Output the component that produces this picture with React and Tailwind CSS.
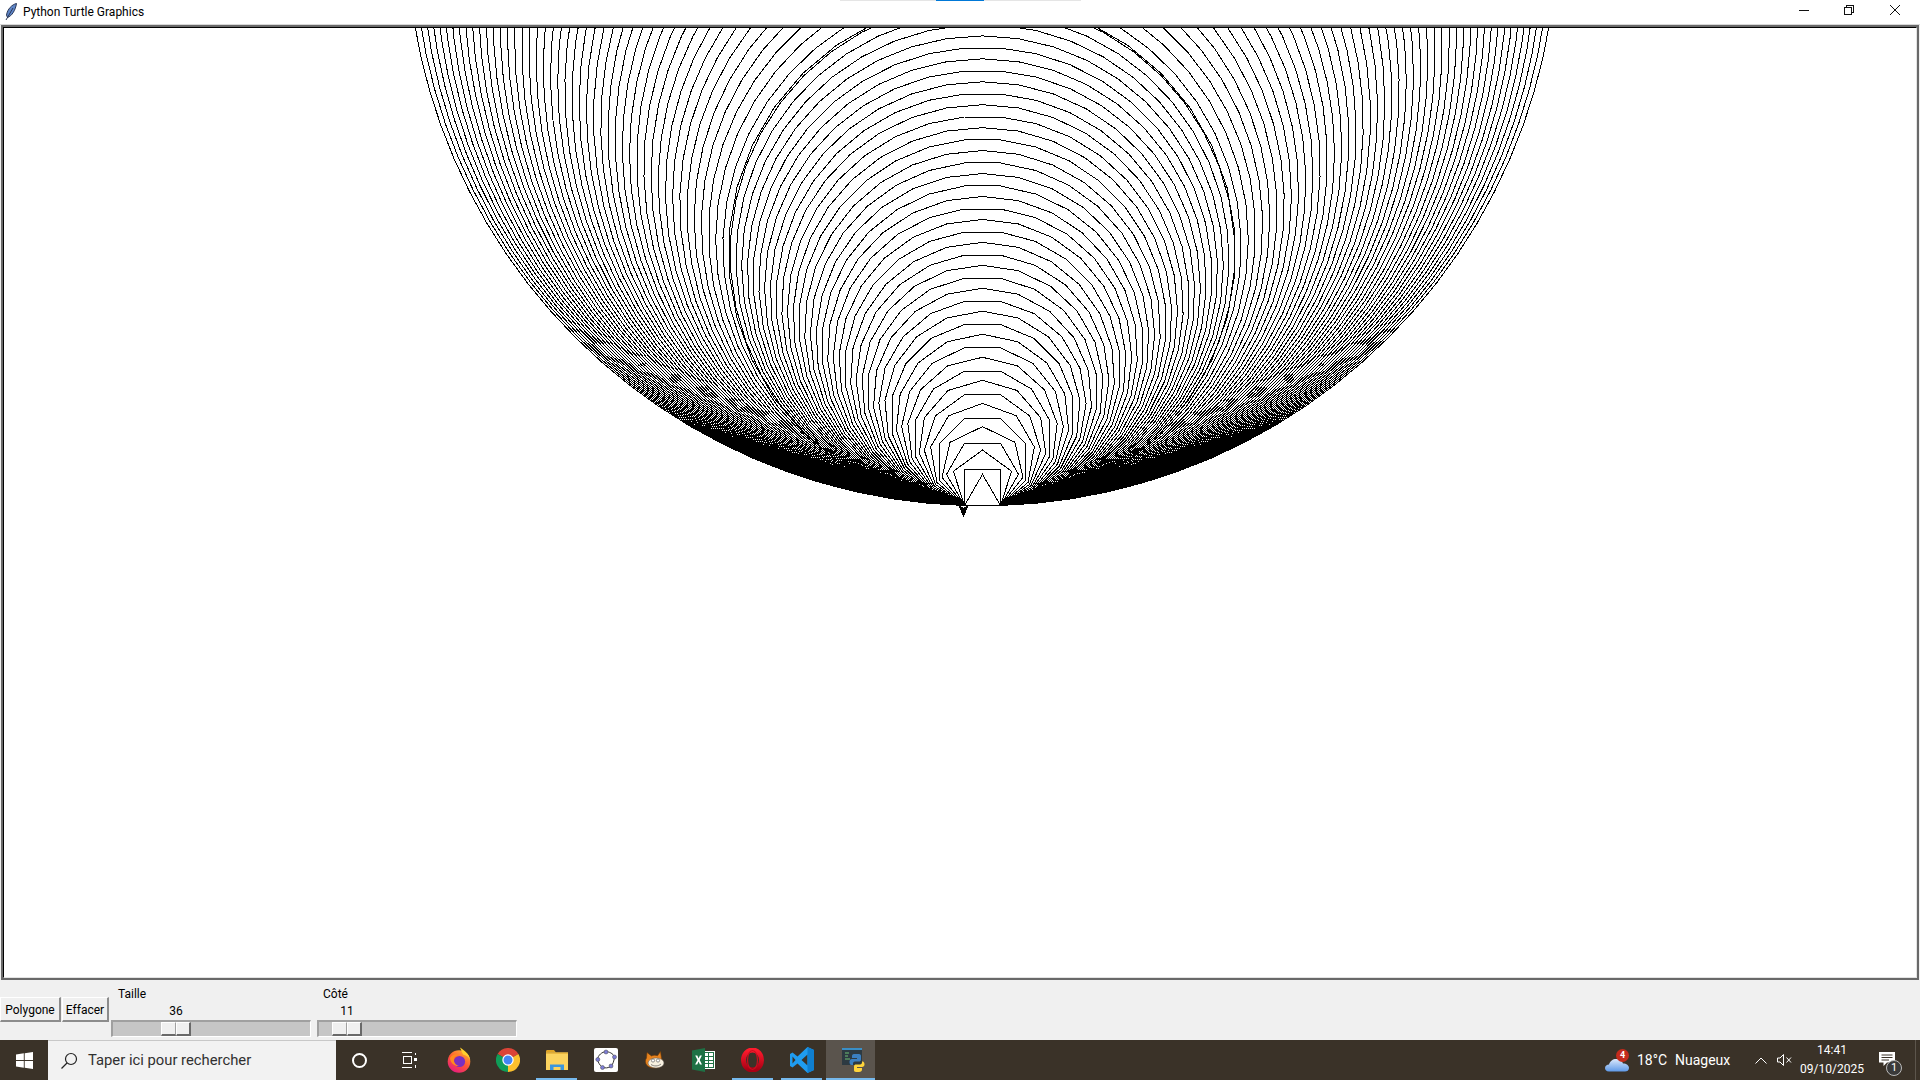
// Python Turtle Graphics window on a Windows 10 desktop

function polygonPath(sides, length, startX, startY) {
  let x = startX;
  let y = startY;
  let d = `M${x + 0.5} ${y + 0.5}`;
  for (let i = 0; i < sides; i++) {
    const angle = (i * 2 * Math.PI) / sides;
    x += length * Math.cos(angle);
    y -= length * Math.sin(angle);
    d += `L${(x + 0.5).toFixed(2)} ${(y + 0.5).toFixed(2)}`;
  }
  return d;
}

function ringPath(radius, sides) {
  const side = 2 * radius * Math.sin(Math.PI / sides);
  return polygonPath(sides, side, 981.5 - side / 2, 505);
}

function TurtleCanvas() {
  const polygons = [];
  for (let n = 3; n <= 44; n++) polygons.push(polygonPath(n, 36, 964, 505));
  // the ring that looks doubled in the drawing
  polygons.push(ringPath(253.6, 36));
  // outer rings are spaced wider than the inner ones
  for (let k = 1; k <= 45; k++) {
    const radius = 252 + k * 7.18;
    polygons.push(ringPath(radius, Math.round((2 * Math.PI * radius) / 36)));
  }

  return (
    <svg className="block w-[1912px] h-[949px]" viewBox="4 28 1912 949" shapeRendering="crispEdges">
      <rect x="4" y="28" width="1912" height="949" fill="#fff" />
      {polygons.map((d, i) => (
        <path key={i} d={d} fill="none" stroke="#000" strokeWidth="1" />
      ))}
      <polygon points="958,505 963.5,508 969,505 963.5,517" fill="#000" />
    </svg>
  );
}

function Feather() {
  return (
    <svg width="14" height="18" viewBox="0 0 14 18">
      <path d="M12.5 .5C8 1.5 3.5 6 2.5 12L3.5 14.5C8 13 11.5 7 12.5 .5Z" fill="#5f86c8" stroke="#2a3756" strokeWidth="1" />
      <path d="M9 5L2 17" stroke="#2a3756" strokeWidth="1" fill="none" />
    </svg>
  );
}

function WindowButtons() {
  return (
    <div className="flex items-center h-full">
      <svg className="w-[140px] h-[24px]" viewBox="1780 0 140 24" shapeRendering="crispEdges">
        <path d="M1799 10.5H1809" stroke="#111" fill="none" />
        <path d="M1844.5 7.5H1851.5V14.5H1844.5ZM1846.5 7V5.5H1853.5V12.5H1852" stroke="#111" fill="none" />
        <path d="M1890 5L1900 15M1900 5L1890 15" stroke="#111" fill="none" shapeRendering="auto" />
      </svg>
    </div>
  );
}

function Slider({ label, value, labelIndent, valueOffset, thumbOffset }) {
  return (
    <div className="w-[200px] flex flex-col">
      <div className={`mt-[6px] h-4 text-[12px] leading-4 text-black ${labelIndent}`}>{label}</div>
      <div className={`h-[18px] pt-[1px] w-[30px] text-center text-[12px] leading-[16px] text-black ${valueOffset}`}>{value}</div>
      <div className="flex h-[17px] bg-[#c6c6c6] border-t-2 border-l-2 border-t-[#a0a0a0] border-l-[#a0a0a0] border-r border-b border-r-white border-b-white">
        <div className={`flex h-[14px] ${thumbOffset}`}>
          <div className="w-[15px] bg-[#f0f0f0] border-t border-l border-white border-r border-r-[#a0a0a0] border-b-2 border-b-[#696969]" />
          <div className="w-[15px] bg-[#f0f0f0] border-t border-l border-white border-r-2 border-r-[#696969] border-b-2 border-b-[#696969]" />
        </div>
      </div>
    </div>
  );
}

function TkButton({ children, width }) {
  return (
    <button className={`h-[25px] ${width} pt-[2px] bg-[#f0f0f0] border-t border-l border-t-white border-l-white border-r-2 border-b-2 border-r-[#8c8c8c] border-b-[#8c8c8c] text-[12px] leading-none text-black flex items-center justify-center`}>
      {children}
    </button>
  );
}

function WindowsLogo() {
  return (
    <svg width="17" height="17" viewBox="0 0 17 17">
      <path d="M0 2.4L7.8 1.3V8H0ZM8.7 1.2L17 0V8H8.7ZM0 9H7.8V15.7L0 14.6ZM8.7 9H17V17L8.7 15.8Z" fill="#fff" />
    </svg>
  );
}

function Firefox() {
  return (
    <svg width="24" height="26" viewBox="0 0 24 26">
      <defs>
        <linearGradient id="ffBody" x1="0.8" y1="0" x2="0.2" y2="1">
          <stop offset="0" stopColor="#ffb52e" />
          <stop offset="0.5" stopColor="#ff5634" />
          <stop offset="1" stopColor="#e31587" />
        </linearGradient>
      </defs>
      <circle cx="12" cy="14.5" r="11.3" fill="url(#ffBody)" />
      <path d="M13 .5C17 3 22.5 7 23.2 13C22 10 19 8 16 7.5C15 5 14 3 13 .5Z" fill="#ffd02e" />
      <circle cx="12.5" cy="14.5" r="5.6" fill="#7a2fc0" />
      <path d="M3 11C5 7 9 6.5 12 8C9 8.5 7.5 10 7 12C6.5 14.5 8 18 12 19C8 19.5 3.5 16.5 3 11Z" fill="#ff8a1e" />
    </svg>
  );
}

function Chrome() {
  return (
    <svg width="24" height="24" viewBox="0 0 24 24">
      <path d="M12 12L1.6 6A12 12 0 0 1 22.4 6Z" fill="#db4437" />
      <path d="M12 12L22.4 6A12 12 0 0 1 12 24Z" fill="#fbc02d" />
      <path d="M12 12L12 24A12 12 0 0 1 1.6 6Z" fill="#0f9d58" />
      <circle cx="12" cy="12" r="5.7" fill="#fff" />
      <circle cx="12" cy="12" r="4.5" fill="#4285f4" />
    </svg>
  );
}

function Explorer() {
  return (
    <svg width="22" height="20" viewBox="0 0 22 20">
      <path d="M0 1.5C0 .7 .5 0 1.3 0H8L10 2.5H0Z" fill="#e0a526" />
      <rect x="0" y="2.5" width="22" height="17.5" fill="#fbd35f" />
      <rect x="0" y="2.5" width="22" height="1.3" fill="#e7b23a" />
      <path d="M4 14.5H18V20H14.5V17H7.5V20H4Z" fill="#3a96dd" />
    </svg>
  );
}

function GeoGebra() {
  return (
    <div className="w-6 h-6 bg-white rounded-[2px] flex items-center justify-center">
      <svg width="22" height="22" viewBox="0 0 22 22">
        <path d="M2.5 10.5C3 6 7 3 11 2.5C14 3 18 4 19.5 8C19 12 18 15 16 17.5C13 19 10 19.5 7 18C4.5 16 3 13 2.5 10.5Z" fill="none" stroke="#333" strokeWidth="1" />
        {[[11, 3], [19.5, 8], [16, 17], [7.5, 18.5], [2.8, 10.5]].map(([cx, cy]) => (
          <circle key={cx} cx={cx} cy={cy} r="2" fill="#7d7dd8" stroke="#444" strokeWidth=".5" />
        ))}
      </svg>
    </div>
  );
}

function Scratch() {
  return (
    <svg width="20" height="20" viewBox="0 0 20 20">
      <path d="M2 2.5L6.5 6C8.5 5 10.5 5 12.5 5.8L15.5 1.5L16.5 8.5C18 11 18.5 14 16 16.5C12 19 5 18.5 2 15.5C0 13 0 10 1.5 8Z" fill="#e8841f" stroke="#6e3a08" strokeWidth=".6" />
      <ellipse cx="11" cy="13" rx="8" ry="5" fill="#f7f0e0" stroke="#555" strokeWidth=".5" />
      <circle cx="8" cy="10.5" r="1.6" fill="#fff" stroke="#333" strokeWidth=".5" />
      <circle cx="13" cy="10.5" r="1.6" fill="#fff" stroke="#333" strokeWidth=".5" />
      <path d="M6 14.5C9 16.5 13 16.5 16 14" fill="none" stroke="#555" strokeWidth=".7" />
    </svg>
  );
}

function Excel() {
  return (
    <svg width="23" height="24" viewBox="0 0 23 24" shapeRendering="crispEdges">
      <rect x="10" y="3" width="13" height="18" fill="#fff" />
      <path d="M11.5 4.5H21.5V19.5H11.5ZM11.5 8.5H21.5M11.5 12H21.5M11.5 15.5H21.5M16 4.5V19.5" stroke="#1e7145" fill="none" />
      <path d="M0 2.5L13 0V24L0 21.5Z" fill="#1e7145" shapeRendering="auto" />
      <path d="M3.2 7.5H5.3L6.6 10.4L7.9 7.5H9.9L7.7 12L10 16.5H7.9L6.6 13.6L5.2 16.5H3.1L5.5 12Z" fill="#fff" shapeRendering="auto" />
    </svg>
  );
}

function Opera() {
  return (
    <svg width="23" height="24" viewBox="0 0 23 24">
      <defs>
        <linearGradient id="opRing" x1="0" y1="0" x2="0" y2="1">
          <stop offset="0" stopColor="#ff1b2d" />
          <stop offset="1" stopColor="#a70014" />
        </linearGradient>
      </defs>
      <ellipse cx="11.5" cy="12" rx="9" ry="10" fill="none" stroke="url(#opRing)" strokeWidth="5" />
      <ellipse cx="11.5" cy="12" rx="5" ry="9.5" fill="none" stroke="#c90f20" strokeWidth="1.2" />
    </svg>
  );
}

function VsCode() {
  return (
    <svg width="24" height="26" viewBox="0 0 24 26">
      <path d="M17.5 0L24 3V23L17.5 26L7.5 16.5L2.5 20.5L0 19V7L2.5 5.5L7.5 9.5ZM17.5 7.5L11.5 13L17.5 18.5ZM2.5 9.5V16.5L5.5 13Z" fill="#1f9cf0" fillRule="evenodd" />
      <path d="M17.5 0L24 3V23L17.5 26V18.5V7.5Z" fill="#0f7fd0" />
    </svg>
  );
}

function PythonIcon() {
  return (
    <svg className="ml-[4px]" width="24" height="26" viewBox="0 0 24 26">
      <rect x="1" y="1" width="20" height="17" fill="#2d3a42" />
      <rect x="1" y="1" width="20" height="2" fill="#3a8fc7" />
      <path d="M4 6H8M4 9H7M4 12H9" stroke="#6fbf73" strokeWidth="1" fill="none" />
      <path d="M11 9C11 7.5 12 7 14 7H18C19.5 7 20 8 20 9V12.5C20 14 19 14.5 18 14.5H14C12.5 14.5 12 15.5 12 17V18H10.5C9 18 8.5 16.5 8.5 15C8.5 13 9.5 12 11 12H16V11H11Z" fill="#3b7fc0" />
      <path d="M22 14.5C23 15 23.5 16 23.5 17.5C23.5 19 22.5 20 21 20H16V21H21V22.5C21 24 20 25 18 25H15C13.5 25 13 24 13 23V19.5C13 18 14 17.5 15 17.5H19C20.5 17.5 21 16.5 21 15V14.5Z" fill="#ffd43b" />
    </svg>
  );
}

function TaskbarIcon({ children, underline, active }) {
  return (
    <div className={`relative w-[49px] h-10 flex items-center justify-center ${active ? 'bg-[#5a544d]' : ''}`}>
      {children}
      {underline && <div className={`absolute bottom-0 h-[2px] bg-[#76b9ed] ${active ? 'inset-x-0' : 'inset-x-1'}`} />}
    </div>
  );
}

function Cloud() {
  return (
    <div className="relative w-6 h-6">
      <svg width="24" height="18" viewBox="0 0 24 18" className="mt-[8px]">
        <defs>
          <linearGradient id="cloudFill" x1="0" y1="0" x2="0" y2="1">
            <stop offset="0" stopColor="#dbe8fb" />
            <stop offset="1" stopColor="#5f9ae8" />
          </linearGradient>
        </defs>
        <path d="M4 15.5C1 15.5 0 13.5 0 12C0 10 2 8.5 4 8.5C5 5 8 3 11 3C15 3 17 5 18 7.5C21.5 7.5 24 9.5 24 12C24 14.5 22 15.5 20 15.5Z" fill="url(#cloudFill)" />
      </svg>
      <div className="absolute top-[1px] right-0 w-[13px] h-[13px] rounded-full bg-[#c42b1c] text-white text-[9px] font-bold leading-[13px] text-center">4</div>
    </div>
  );
}

export default function App() {
  return (
    <div className="relative w-[1920px] h-[1080px] overflow-hidden bg-[#f0f0f0] flex flex-col font-['Roboto',sans-serif]">
      {/* snap assist strip at the top edge */}
      <div className="absolute top-0 left-[840px] w-[241px] h-px bg-[#e5e5e5]">
        <div className="ml-[96px] w-[48px] h-px bg-[#0078d7]" />
      </div>

      {/* Title bar */}
      <div className="h-[25px] bg-white border-b border-[#d8d8d8] flex items-center justify-between">
        <div className="flex items-center pl-[4px]">
          <Feather />
          <span className="ml-[5px] text-[12px] text-black">Python Turtle Graphics</span>
        </div>
        <WindowButtons />
      </div>

      {/* Canvas */}
      <div className="mx-px h-[955px] border-2 border-[#696969]">
        <div className="border-t border-l border-t-black border-l-black border-r border-b border-r-[#e3e3e3] border-b-[#e3e3e3]">
          <TurtleCanvas />
        </div>
      </div>

      {/* Controls */}
      <div className="h-[60px] flex items-start">
        <div className="flex gap-px mt-[17px]">
          <TkButton width="w-[61px]">Polygone</TkButton>
          <TkButton width="w-[47px]">Effacer</TkButton>
        </div>
        <div className="ml-[2px]">
          <Slider label="Taille" value="36" labelIndent="pl-[7px]" valueOffset="ml-[50px]" thumbOffset="ml-[48px]" />
        </div>
        <div className="ml-[6px]">
          <Slider label="Côté" value="11" labelIndent="pl-[6px]" valueOffset="ml-[15px]" thumbOffset="ml-[13px]" />
        </div>
      </div>

      {/* Taskbar */}
      <div className="h-10 bg-[#3a3228] flex items-center text-white">
        <div className="w-12 flex justify-center"><WindowsLogo /></div>
        <div className="w-[288px] h-10 bg-[#f2f2f2] border-t border-[#c8c8c8] flex items-center pl-[12px] text-[#303030]">
          <svg width="18" height="18" viewBox="0 0 18 18" fill="none" stroke="#222" strokeWidth="1.2">
            <circle cx="11" cy="7" r="5.5" />
            <path d="M7 11L1.5 16.5" />
          </svg>
          <span className="ml-[10px] text-[14.8px]">Taper ici pour rechercher</span>
        </div>
        <div className="w-[47px] flex justify-center">
          <div className="w-[15px] h-[15px] rounded-full border-2 border-white" />
        </div>
        <div className="w-[51px] flex justify-center">
          <svg width="16" height="16" viewBox="0 0 16 16" fill="none" stroke="#fff" strokeWidth="1" shapeRendering="crispEdges">
            <path d="M1 .5H11M1 15.5H11M2.5 4.5H10.5V11.5H2.5ZM14.5 .5V3M14.5 13V15.5" />
            <rect x="13" y="6" width="3" height="3" fill="#fff" stroke="none" />
          </svg>
        </div>
        <TaskbarIcon><Firefox /></TaskbarIcon>
        <TaskbarIcon><Chrome /></TaskbarIcon>
        <TaskbarIcon underline><Explorer /></TaskbarIcon>
        <TaskbarIcon><GeoGebra /></TaskbarIcon>
        <TaskbarIcon><Scratch /></TaskbarIcon>
        <TaskbarIcon><Excel /></TaskbarIcon>
        <TaskbarIcon underline><Opera /></TaskbarIcon>
        <TaskbarIcon underline><VsCode /></TaskbarIcon>
        <TaskbarIcon underline active><PythonIcon /></TaskbarIcon>

        {/* Tray */}
        <div className="ml-auto w-[315px] flex items-center h-10">
          <Cloud />
          <span className="ml-[8px] w-[38px] text-[14px]">18°C</span>
          <span className="w-[80px] text-[14px]">Nuageux</span>
          <svg width="12" height="7" viewBox="0 0 12 7" fill="none" stroke="#fff" strokeWidth="1">
            <path d="M.5 6.5L6 1L11.5 6.5" />
          </svg>
          <svg className="ml-[10px]" width="15" height="12" viewBox="0 0 15 12" fill="none" stroke="#fff" strokeWidth="1">
            <path d="M.5 4H3L6.5 .5V11.5L3 8H.5ZM9.5 3.5L14 8.5M14 3.5L9.5 8.5" />
          </svg>
          <div className="ml-[8px] w-[64px] flex flex-col items-center text-[12px] leading-[19px]">
            <span>14:41</span>
            <span>09/10/2025</span>
          </div>
          <div className="relative ml-[15px] w-[24px] h-10">
            <svg className="absolute top-[12px] left-0" width="16" height="14" viewBox="0 0 16 14">
              <path d="M0 0H16V10.5H8L4.5 14V10.5H0Z" fill="#fff" />
              <path d="M2.5 3H13.5M2.5 5.5H13.5M2.5 8H10" stroke="#3a3228" strokeWidth="1" />
            </svg>
            <div className="absolute top-[20px] left-[7px] w-[16px] h-[16px] rounded-full bg-[#3a3a3a] border border-[#bbb] text-[11px] leading-[14px] text-center">1</div>
          </div>
          <div className="ml-[12px] w-px h-10 bg-[#5c554c]" />
        </div>
      </div>
    </div>
  );
}
